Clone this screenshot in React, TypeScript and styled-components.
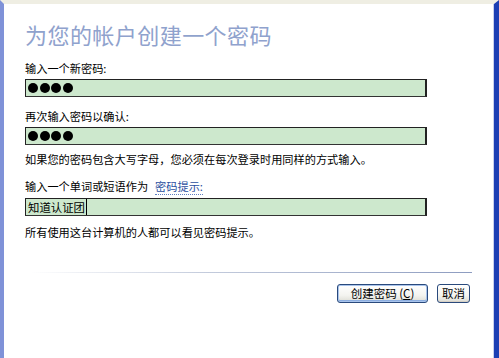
import React from 'react';
import styled, { createGlobalStyle } from 'styled-components';

const GlobalStyle = createGlobalStyle`
	html, body {
		margin: 0;
		padding: 0;
		background: #ffffff;
	}
	body {
		font-family: "Noto Sans CJK SC", "Liberation Sans", sans-serif;
		font-size: 11.2px;
		color: #000;
	}
`;

const Window = styled.div`
	box-sizing: border-box;
	width: 499px;
	height: 358px;
	display: flex;
	flex-direction: column;
	background: #ffffff;
	border-top: 4px solid #efeee3;
	border-left: 4px solid #7f92d8;
	border-right: 5px solid #1c3fb4;
	box-shadow: inset -1px 0 0 #c7d0ee;
`;

const Content = styled.div`
	display: flex;
	flex-direction: column;
	padding: 17px 0 0 21px;
`;

const Title = styled.h1`
	margin: 0 0 13px;
	font-size: 22px;
	line-height: 26px;
	font-weight: normal;
	letter-spacing: 0.45px;
	color: #8fa2cd;
`;

const Label = styled.div<{ $gap?: number }>`
	margin-top: ${(p) => p.$gap ?? 0}px;
	line-height: 16px;
	font-size: 11.2px;
	white-space: nowrap;
`;

const Field = styled.div<{ $gap?: number }>`
	box-sizing: border-box;
	margin-top: ${(p) => p.$gap ?? 3}px;
	width: 402px;
	height: 18px;
	display: flex;
	align-items: center;
	gap: 1px;
	padding-left: 2px;
	background: #cde8cd;
	border: 1px solid #222;
	border-right-width: 2px;
	border-bottom-color: #333;
`;

const Dot = styled.span`
	width: 10px;
	height: 10px;
	border-radius: 50%;
	background: #000;
	margin-right: 0.5px;
`;

const FieldText = styled.span`
	font-size: 11.4px;
	line-height: 16px;
	border-right: 1px solid #000;
	padding-right: 1px;
`;

const HintLink = styled.span`
	margin-left: 7px;
	color: #2b4fa0;
	border-bottom: 1px dotted #5f7fc0;
`;

const Footer = styled.div`
	margin-top: auto;
	display: flex;
	flex-direction: column;
	padding-bottom: 55px;
`;

const Separator = styled.div`
	height: 1px;
	margin: 0 22px 11px 26px;
	background: linear-gradient(to right, #ffffff 0%, #c3cbdc 40%, #8d9cc0 100%);
`;

const ButtonRow = styled.div`
	display: flex;
	justify-content: flex-end;
	gap: 9px;
	padding-right: 24px;
`;

const Button = styled.button<{ $w: number; $default?: boolean }>`
	box-sizing: border-box;
	width: ${(p) => p.$w}px;
	height: 19px;
	padding: 0;
	font-family: "Noto Sans CJK SC", "Liberation Sans", sans-serif;
	font-size: 11.5px;
	line-height: 15px;
	color: #000;
	border: 1px solid #2a4a7c;
	border-radius: 3px;
	background: linear-gradient(to bottom, #ffffff 0%, #f4f4f0 60%, #dcdcd4 100%);
	box-shadow: ${(p) =>
		p.$default ? 'inset 0 0 0 1px #a9c4ec, inset 0 -1px 0 1px #8caee0' : 'inset 0 -1px 0 #d6d0c5'};
`;

const Accel = styled.span`
	text-decoration: underline;
`;

export default function App() {
	return (
		<>
			<GlobalStyle />
			<Window>
				<Content>
					<Title>为您的帐户创建一个密码</Title>
					<Label>输入一个新密码:</Label>
					<Field>
						<Dot />
						<Dot />
						<Dot />
						<Dot />
					</Field>
					<Label $gap={11}>再次输入密码以确认:</Label>
					<Field>
						<Dot />
						<Dot />
						<Dot />
						<Dot />
					</Field>
					<Label $gap={6}>如果您的密码包含大写字母，您必须在每次登录时用同样的方式输入。</Label>
					<Label $gap={11}>
						输入一个单词或短语作为<HintLink>密码提示:</HintLink>
					</Label>
					<Field $gap={4}>
						<FieldText>知道认证团</FieldText>
					</Field>
					<Label $gap={8}>所有使用这台计算机的人都可以看见密码提示。</Label>
				</Content>
				<Footer>
					<Separator />
					<ButtonRow>
						<Button $w={91} $default>
							创建密码 (<Accel>C</Accel>)
						</Button>
						<Button $w={33}>取消</Button>
					</ButtonRow>
				</Footer>
			</Window>
		</>
	);
}
